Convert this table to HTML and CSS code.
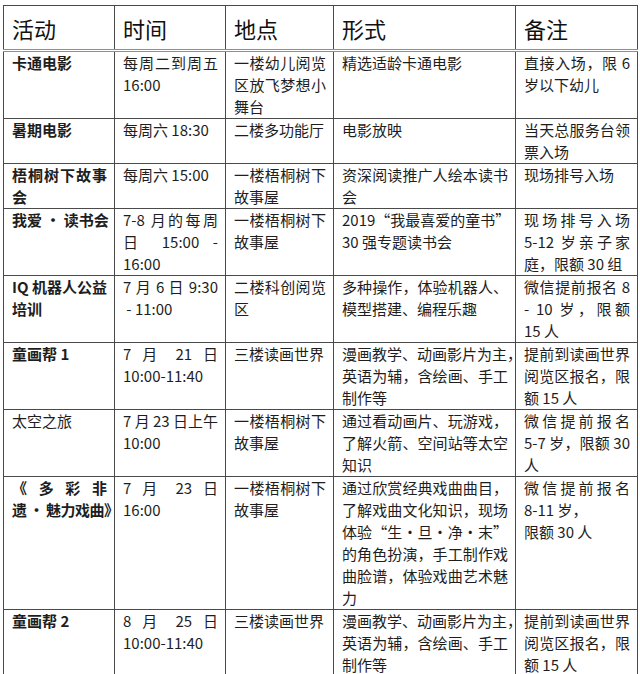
FILE: index.html
```html
<!DOCTYPE html>
<html lang="zh-CN">
<head>
<meta charset="utf-8">
<title>活动安排</title>
<link rel="stylesheet" href="styles.css">
</head>
<body>
<table class="schedule">
  <colgroup>
    <col class="c1"><col class="c2"><col class="c3"><col class="c4"><col class="c5">
  </colgroup>
  <thead>
    <tr><th>活动</th><th>时间</th><th>地点</th><th>形式</th><th>备注</th></tr>
  </thead>
  <tbody>
    <tr>
      <td class="name">卡通电影</td>
      <td><span class="j">每周二到周五</span>16:00</td>
      <td><span class="j">一楼幼儿阅览</span><span class="j">区放飞梦想小</span>舞台</td>
      <td>精选适龄卡通电影</td>
      <td><span class="j">直接入场，限 6</span>岁以下幼儿</td>
    </tr>
    <tr>
      <td class="name">暑期电影</td>
      <td>每周六 18:30</td>
      <td>二楼多功能厅</td>
      <td>电影放映</td>
      <td><span class="j">当天总服务台领</span>票入场</td>
    </tr>
    <tr>
      <td class="name"><span class="j">梧桐树下故事</span>会</td>
      <td>每周六 15:00</td>
      <td><span class="j">一楼梧桐树下</span>故事屋</td>
      <td><span class="j">资深阅读推广人绘本读书</span>会</td>
      <td>现场排号入场</td>
    </tr>
    <tr>
      <td class="name">我爱 · 读书会</td>
      <td><span class="j">7-8 月的每周</span><span class="j">日 15:00 -</span>16:00</td>
      <td><span class="j">一楼梧桐树下</span>故事屋</td>
      <td><span class="j">2019“我最喜爱的童书”</span>30 强专题读书会</td>
      <td><span class="j">现场排号入场</span><span class="j">5-12 岁亲子家</span>庭，限额 30 组</td>
    </tr>
    <tr>
      <td class="name"><span class="j">IQ 机器人公益</span>培训</td>
      <td><span class="j">7 月 6 日 9:30</span>&nbsp;- 11:00</td>
      <td><span class="j">二楼科创阅览</span>区</td>
      <td><span class="j">多种操作，体验机器人、</span>模型搭建、编程乐趣</td>
      <td><span class="j">微信提前报名 8</span><span class="j">- 10 岁，限额</span>15 人</td>
    </tr>
    <tr>
      <td class="name">童画帮 1</td>
      <td><span class="j">7 月 21 日</span>10:00-11:40</td>
      <td>三楼读画世界</td>
      <td><span class="j">漫画教学、动画影片为主，</span><span class="j">英语为辅，含绘画、手工</span>制作等</td>
      <td><span class="j">提前到读画世界</span><span class="j">阅览区报名，限</span>额 15 人</td>
    </tr>
    <tr>
      <td class="name plain">太空之旅</td>
      <td><span class="j">7 月 23 日上午</span>10:00</td>
      <td><span class="j">一楼梧桐树下</span>故事屋</td>
      <td><span class="j">通过看动画片、玩游戏，</span><span class="j">了解火箭、空间站等太空</span>知识</td>
      <td><span class="j">微信提前报名</span><span class="j">5-7 岁，限额 30</span>人</td>
    </tr>
    <tr>
      <td class="name"><span class="j">《 多 彩 非</span><span class="tight">遗&#8201;·&#8201;魅力戏曲》</span></td>
      <td><span class="j">7 月 23 日</span>16:00</td>
      <td><span class="j">一楼梧桐树下</span>故事屋</td>
      <td><span class="j">通过欣赏经典戏曲曲目，</span><span class="j">了解戏曲文化知识，现场</span><span class="j">体验“生·旦·净·末”</span><span class="j">的角色扮演，手工制作戏</span><span class="j">曲脸谱，体验戏曲艺术魅</span>力</td>
      <td><span class="j">微信提前报名</span>8-11 岁，<br>限额 30 人</td>
    </tr>
    <tr>
      <td class="name">童画帮 2</td>
      <td><span class="j">8 月 25 日</span>10:00-11:40</td>
      <td>三楼读画世界</td>
      <td><span class="j">漫画教学、动画影片为主，</span><span class="j">英语为辅，含绘画、手工</span>制作等</td>
      <td><span class="j">提前到读画世界</span><span class="j">阅览区报名，限</span>额 15 人</td>
    </tr>
  </tbody>
</table>
</body>
</html>
```
FILE: styles.css
```css
html, body {
  background: #ffffff;
}
body {
  margin: 5px 0 0 3px;
  font-family: "Noto Sans CJK SC", "Noto Sans", sans-serif;
  color: #1e1e1e;
}
.schedule {
  border-collapse: collapse;
  table-layout: fixed;
  width: 634px;
}
.c1 { width: 111px; }
.c2 { width: 111px; }
.c3 { width: 108px; }
.c4 { width: 182px; }
.c5 { width: 122px; }
.schedule th,
.schedule td {
  border: 1px solid #4a4a4a;
  padding: 0 7px 0 8px;
  vertical-align: top;
  text-align: left;
  white-space: nowrap;
}
.schedule th {
  height: 43px;
  vertical-align: middle;
  font-size: 22px;
  font-weight: normal;
  line-height: 28px;
  color: #111;
  border-bottom: 3px double #7f93a8;
}
.schedule td {
  font-size: 15px;
  line-height: 22px;
}
.schedule td.name {
  font-weight: bold;
}
.schedule td.plain {
  font-weight: normal;
}
.j {
  display: block;
  text-align: justify;
  text-align-last: justify;
}
.tight {
  display: block;
  letter-spacing: -0.5px;
}
```
